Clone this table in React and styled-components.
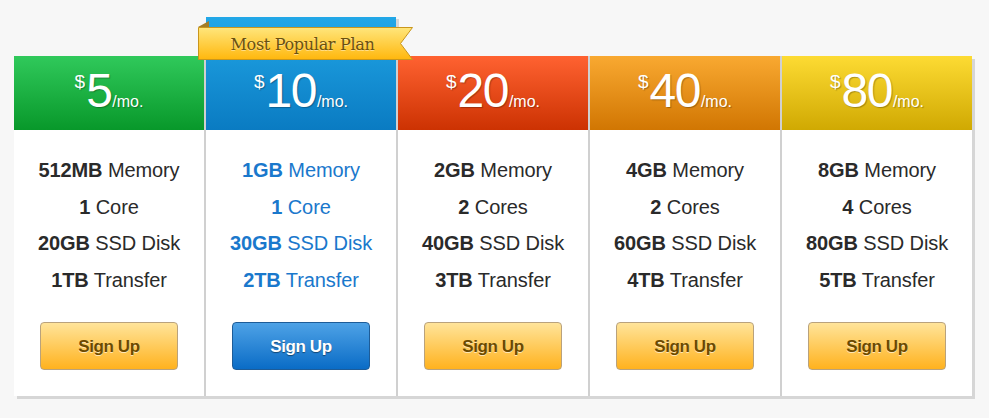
import React from "react";
import styled, { createGlobalStyle } from "styled-components";

const Global = createGlobalStyle`
  html, body { margin: 0; padding: 0; background: #f7f7f7; }
  body { font-family: "Liberation Sans", Arial, sans-serif; }
`;

const Page = styled.div`
  width: 989px;
  height: 418px;
  padding: 56px 0 0 14px;
  box-sizing: border-box;
`;

const Table = styled.div`
  display: flex;
  width: 958px;
  box-shadow: 3px 3px 0 #d6d6d6;
`;

const Column = styled.div`
  position: relative;
  width: 190px;
  flex: 0 0 auto;
  box-sizing: content-box;
  border-left: ${(p) => (p.$first ? "none" : "2px solid #d0d0d0")};
  display: flex;
  flex-direction: column;
`;

const Header = styled.div`
  height: ${(p) => (p.$raised ? "113px" : "74px")};
  margin-top: ${(p) => (p.$raised ? "-39px" : "0")};
  background: linear-gradient(to bottom, ${(p) => p.$top}, ${(p) => p.$bottom});
  box-shadow: ${(p) => (p.$raised ? "3px 2px 0 #d6d6d6" : "none")};
  display: flex;
  align-items: flex-end;
  justify-content: center;
  padding-bottom: 15px;
  box-sizing: border-box;
  color: #fff;
  text-shadow: 1px 1px 1px rgba(0, 0, 0, 0.28);
`;

const Price = styled.div`
  font-size: 48px;
  line-height: 48px;
  white-space: nowrap;
`;

const Dollar = styled.span`
  font-size: 19px;
  line-height: 1;
  vertical-align: 19px;
  margin-right: 1px;
`;

const Amount = styled.span`
  font-size: 48px;
  letter-spacing: -1.5px;
  margin-right: 1px;
`;

const Per = styled.span`
  font-size: 16px;
  line-height: 1;
`;

const Body = styled.div`
  flex: 1;
  background: #fff;
  display: flex;
  flex-direction: column;
  align-items: center;
  padding: 22px 0 26px;
`;

const Features = styled.ul`
  list-style: none;
  margin: 0;
  padding: 0;
  text-align: center;
  font-size: 20px;
  line-height: 36.67px;
  color: ${(p) => (p.$popular ? "#1a78cc" : "#2a2a2a")};
  letter-spacing: -0.1px;
`;

const Feature = styled.li`
  white-space: nowrap;
  b { font-weight: bold; }
`;

const Button = styled.button`
  margin-top: 23px;
  width: 138px;
  height: 48px;
  border-radius: 4px;
  padding: 3px 0 0;
  font-family: "Liberation Sans", Arial, sans-serif;
  font-weight: bold;
  font-size: 17px;
  letter-spacing: -0.4px;
  cursor: pointer;
  border: 1px solid ${(p) => (p.$popular ? "#1d5c98" : "#b9a27c")};
  background: ${(p) =>
    p.$popular
      ? "linear-gradient(to bottom, #4ea2e6, #0a6cc6)"
      : "linear-gradient(to bottom, #ffe49a, #ffb21e)"};
  color: ${(p) => (p.$popular ? "#fff" : "#6b4a00")};
  text-shadow: ${(p) =>
    p.$popular ? "0 1px 1px rgba(0,0,0,0.45)" : "0 1px 0 rgba(255,255,255,0.6)"};
`;

const Ribbon = styled.div`
  position: absolute;
  z-index: 2;
  left: -8px;
  top: -29px;
  width: 215px;
  height: 33px;
  display: flex;
  align-items: center;
  padding-right: 6px;
  box-sizing: border-box;
  justify-content: center;
`;

const RibbonShape = styled.svg`
  position: absolute;
  left: 0;
  top: -6px;
  overflow: visible;
`;

const RibbonText = styled.span`
  position: relative;
  font-family: "DejaVu Serif", "Liberation Serif", serif;
  font-size: 16px;
  color: #6a500f;
  letter-spacing: -0.3px;
  text-shadow: 0 1px 0 rgba(255, 255, 255, 0.45);
  padding-top: 1px;
`;

const plans = [
  { price: "5", top: "#30c95b", bottom: "#08982a", mem: "512MB", core: "1", coreL: "Core", disk: "20GB", tr: "1TB" },
  { price: "10", top: "#22a7e7", bottom: "#0a7bc2", mem: "1GB", core: "1", coreL: "Core", disk: "30GB", tr: "2TB", popular: true },
  { price: "20", top: "#ff6231", bottom: "#cc3202", mem: "2GB", core: "2", coreL: "Cores", disk: "40GB", tr: "3TB" },
  { price: "40", top: "#f9a931", bottom: "#d17602", mem: "4GB", core: "2", coreL: "Cores", disk: "60GB", tr: "4TB" },
  { price: "80", top: "#fddb33", bottom: "#d0a902", mem: "8GB", core: "4", coreL: "Cores", disk: "80GB", tr: "5TB" },
];

export default function App() {
  return (
    <>
      <Global />
      <Page>
        <Table>
          {plans.map((p, i) => (
            <Column key={p.price} $first={i === 0}>
              {p.popular && (
                <Ribbon>
                  <RibbonShape width="215" height="39" viewBox="0 -6 215 39">
                    <defs>
                      <linearGradient id="rib" x1="0" y1="0" x2="0" y2="1">
                        <stop offset="0" stopColor="#ffe67c" />
                        <stop offset="1" stopColor="#ffb70d" />
                      </linearGradient>
                    </defs>
                    <polygon points="0,0 11,-6 11,0" fill="#a37d27" />
                    <polygon
                      points="0.5,0.5 214.5,0.5 202.5,16.5 214.5,32.5 0.5,32.5"
                      fill="url(#rib)"
                      stroke="#c9961c"
                      strokeWidth="1"
                    />
                  </RibbonShape>
                  <RibbonText>Most Popular Plan</RibbonText>
                </Ribbon>
              )}
              <Header $top={p.top} $bottom={p.bottom} $raised={p.popular}>
                <Price>
                  <Dollar>$</Dollar>
                  <Amount>{p.price}</Amount>
                  <Per>/mo.</Per>
                </Price>
              </Header>
              <Body>
                <Features $popular={p.popular}>
                  <Feature><b>{p.mem}</b> Memory</Feature>
                  <Feature><b>{p.core}</b> {p.coreL}</Feature>
                  <Feature><b>{p.disk}</b> SSD Disk</Feature>
                  <Feature><b>{p.tr}</b> Transfer</Feature>
                </Features>
                <Button $popular={p.popular}>Sign Up</Button>
              </Body>
            </Column>
          ))}
        </Table>
      </Page>
    </>
  );
}
